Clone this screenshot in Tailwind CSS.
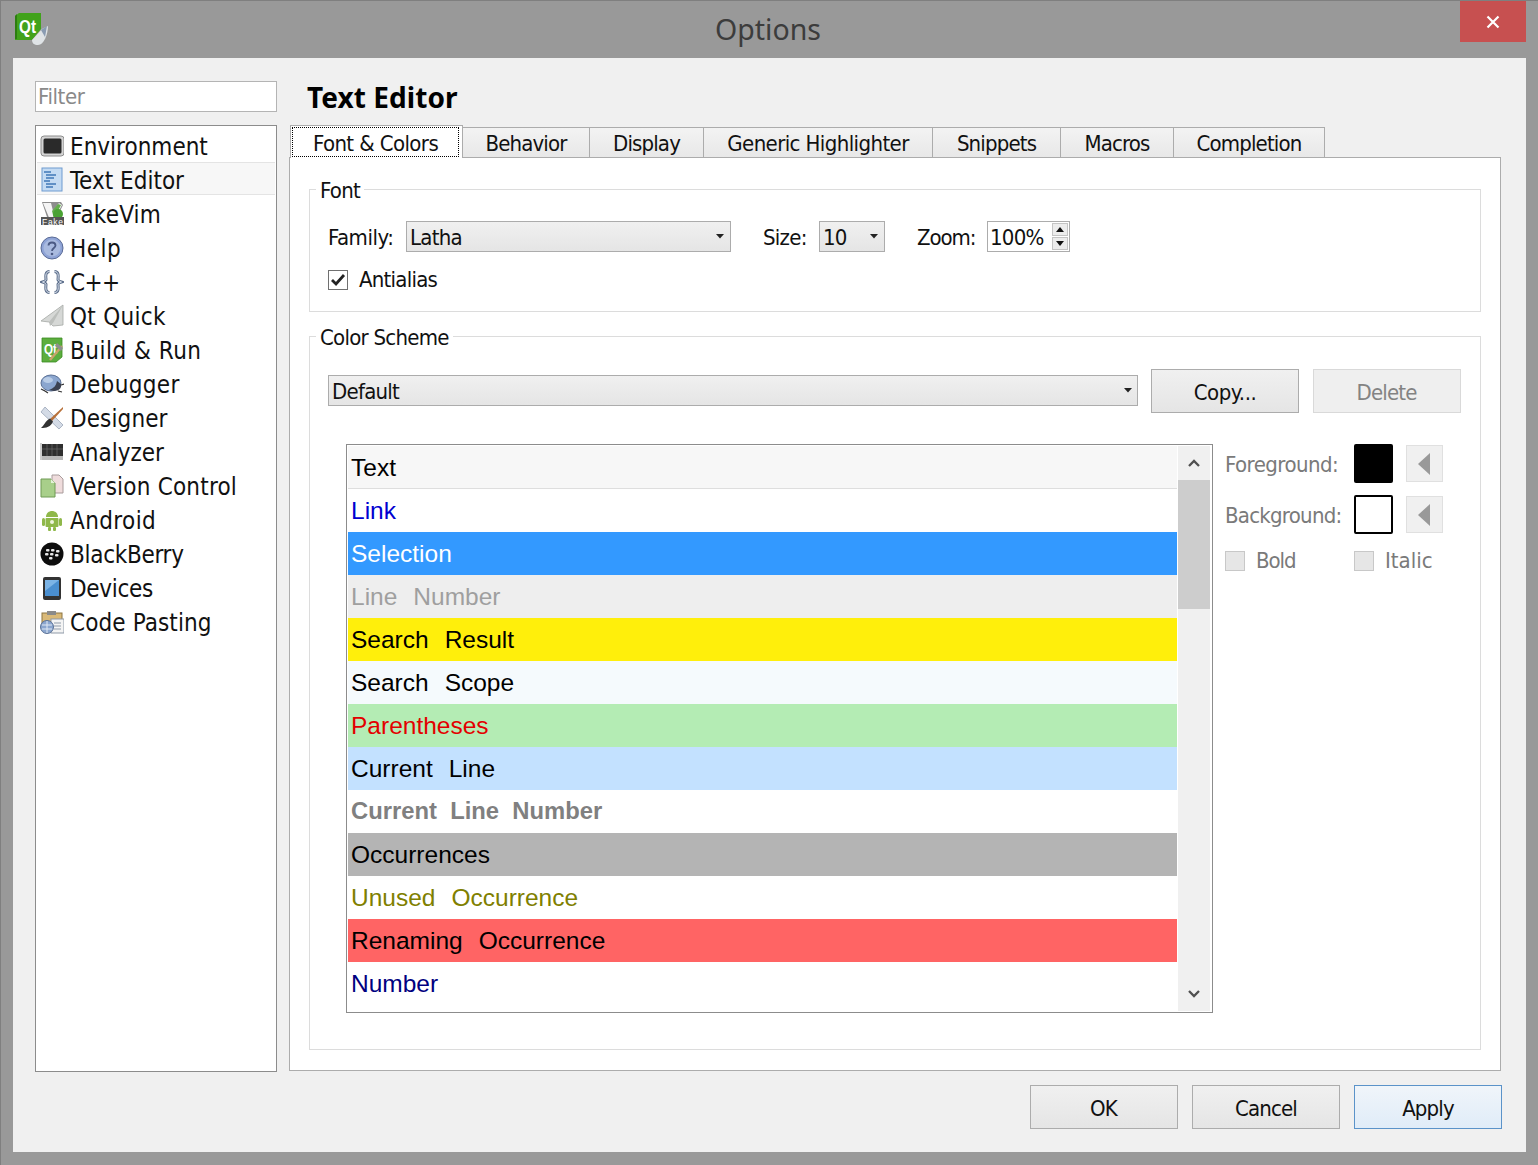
<!DOCTYPE html>
<html><head><meta charset="utf-8"><title>Options</title>
<script src="https://cdn.jsdelivr.net/npm/@tailwindcss/browser@4"></script></head>
<body class="m-0 w-[1538px] h-[1165px] overflow-hidden bg-[#999999] font-['DejaVu_Sans_Condensed','Noto_Sans',sans-serif] text-[#111111]">
<div class="w-[1538px] h-[1165px] flex flex-col border-t border-l border-[#7f7f7f]">
  <!-- title bar -->
  <div class="relative h-[57px] shrink-0 flex justify-center items-center">
    <svg class="absolute left-[13px] top-[11px]" width="36" height="36" viewBox="0 0 36 36">
      <path d="M5 1H27V17L18 28H1V4Z" fill="#41a21b"/><path d="M1 4L3 2V27H1Z" fill="#2c7d10"/>
      <path d="M18 28L28 17L34 14C34 22 30 33 24 33C20 33 18 31 18 28Z" fill="#dfe3e6"/><path d="M27 18L33 14L31 25Z" fill="#8a9bb2"/>
      <text x="5" y="21" font-family="Liberation Sans" font-weight="700" font-size="19" fill="#fff" textLength="17" lengthAdjust="spacingAndGlyphs">Qt</text>
    </svg>
    <span class="font-['Noto_Sans'] text-[28.5px] leading-none text-[#3c3c3c] mr-[3px]">Options</span>
    <div class="absolute right-[12px] top-[0px] w-[66px] h-[41px] bg-[#c75050] flex items-center justify-center">
      <svg width="14" height="14" viewBox="0 0 14 14"><path d="M1.5 1.5L12.5 12.5M12.5 1.5L1.5 12.5" stroke="#fff" stroke-width="2.2"/></svg>
    </div>
  </div>
  <!-- client -->
  <div class="ml-[12px] w-[1513px] h-[1094px] bg-[#f0f0f0] pt-[23px] pl-[22px] flex flex-col">
    <div class="flex items-start h-[990px]">
      <!-- left -->
      <div class="w-[242px] shrink-0 flex flex-col">
        <div class="h-[31px] border border-[#b4b4b4] bg-white flex items-center pl-[2px] text-[22px] text-[#8a8a8a] tracking-[-0.4px]">Filter</div>
        <div class="mt-[13px] h-[947px] border border-[#8c8c8c] bg-white pt-[2px] pl-[1px] pr-[1px] flex flex-col text-[24px]">
          <div class="h-[34px] flex items-center gap-[6px] pl-[3px] pt-[2px]">
            <svg class="shrink-0" width="24" height="24" viewBox="0 0 24 24"><rect x="1" y="2" width="23" height="20" rx="3" fill="#d4d4d4" stroke="#8d8d8d"/><rect x="3.5" y="4.5" width="18" height="15" rx="1.5" fill="#2a2a2a"/></svg>
            <span class="pt-[2px]">Environment</span></div>
          <div class="h-[33px] mb-[1px] flex items-center gap-[6px] pl-[3px] pt-[2px] bg-[#f7f7f7] border-y border-[#e4e4e4]">
            <svg class="shrink-0 -mt-[2px]" width="24" height="26" viewBox="0 0 24 26"><rect x="2" y="2" width="20" height="23" fill="#c4dbf3" stroke="#6f9bd0"/><path d="M4 6h7M6 9h10M6 12h8M4 15h6M6 18h10M6 21h7" stroke="#3f78b8" stroke-width="1.3"/></svg>
            <span class="pt-[2px]">Text Editor</span></div>
          <div class="h-[34px] flex items-center gap-[6px] pl-[3px] pt-[2px]">
            <svg class="shrink-0" width="24" height="26" viewBox="0 0 24 26"><path d="M2 1H21L23 4L17 16H7Z" fill="#8d8d8d"/><path d="M3 2H11L13 10L19 2L22 4L14 19H10Z" fill="#f4f4f4"/><path d="M12 10L18 3L21 4L14 18Z" fill="#63ad4d"/><circle cx="18" cy="13" r="5" fill="#4aa234"/><rect x="1" y="16" width="23" height="8" fill="#555"/><text x="2" y="23.500" font-family="Liberation Sans" font-size="8.500" fill="#fff" textLength="21">Fake</text></svg>
            <span class="pt-[2px] tracking-[0.2px]">FakeVim</span></div>
          <div class="h-[34px] flex items-center gap-[6px] pl-[3px] pt-[2px]">
            <svg class="shrink-0" width="24" height="24" viewBox="0 0 24 24"><circle cx="12" cy="12" r="11" fill="#8ea3d6" stroke="#5a6b96"/><circle cx="12" cy="12" r="8.500" fill="#a9badf"/><path d="M8.500 9.500C8.500 5.500 15.500 5.500 15.500 9.500C15.500 12 12 12 12 15" fill="none" stroke="#4b5a84" stroke-width="1.800"/><circle cx="12" cy="18" r="1.300" fill="#4b5a84"/></svg>
            <span class="pt-[2px] tracking-[0.5px]">Help</span></div>
          <div class="h-[34px] flex items-center gap-[6px] pl-[3px] pt-[2px]">
            <svg class="shrink-0" width="24" height="24" viewBox="0 0 24 24"><path d="M9.500 1.500C4.500 1.500 6 8 6 9.500C6 11 2.500 12 2.500 12C2.500 12 6 13 6 14.500C6 16 4.500 22.500 9.500 22.500M14.500 1.500C19.500 1.500 18 8 18 9.500C18 11 21.500 12 21.500 12C21.500 12 18 13 18 14.500C18 16 19.500 22.500 14.500 22.500" fill="none" stroke="#5d6f8c" stroke-width="3"/><path d="M9.500 1.500C4.500 1.500 6 8 6 9.500C6 11 2.500 12 2.500 12C2.500 12 6 13 6 14.500C6 16 4.500 22.500 9.500 22.500M14.500 1.500C19.500 1.500 18 8 18 9.500C18 11 21.500 12 21.500 12C21.500 12 18 13 18 14.500C18 16 19.500 22.500 14.500 22.500" fill="none" stroke="#dfe6f0" stroke-width="1"/></svg>
            <span class="pt-[2px] tracking-[-0.6px]">C++</span></div>
          <div class="h-[34px] flex items-center gap-[6px] pl-[3px] pt-[2px]">
            <svg class="shrink-0" width="24" height="24" viewBox="0 0 24 24"><path d="M23 1L1 17L9 18L13 22L23 21Z" fill="#d6d8d6" stroke="#a5a8a5" stroke-width=".8"/><path d="M23 1L9 18L10 22L13 19Z" fill="#bcbfbc"/></svg>
            <span class="pt-[2px] tracking-[0.3px]">Qt Quick</span></div>
          <div class="h-[34px] flex items-center gap-[6px] pl-[3px] pt-[2px]">
            <svg class="shrink-0" width="24" height="26" viewBox="0 0 24 26"><path d="M2 1H22V20L16 25H2Z" fill="#5cae3e" stroke="#3b8a22" stroke-width=".8"/><text x="4" y="17" font-family="Liberation Sans" font-weight="700" font-size="15" fill="#fff" textLength="13" lengthAdjust="spacingAndGlyphs">Qt</text><path d="M10 23L22 9" stroke="#c9a36a" stroke-width="2.400"/><path d="M17 6L23 11L21 14L15 9Z" fill="#8e8f8e"/></svg>
            <span class="pt-[2px] tracking-[0.5px]">Build &amp; Run</span></div>
          <div class="h-[34px] flex items-center gap-[6px] pl-[3px] pt-[2px]">
            <svg class="shrink-0" width="24" height="24" viewBox="0 0 24 24"><path d="M1 17L5 19L8 21M21 13L24 12M18 19L22 20" stroke="#333" stroke-width="1.200"/><ellipse cx="11" cy="11" rx="10" ry="8" fill="#8ba6cf" stroke="#5b7196"/><path d="M14 19C19 19 22 16 21 12L17 9C16 14 14 16 9 18Z" fill="#3b4150"/><ellipse cx="8" cy="8" rx="5" ry="3" fill="#b9cce6"/></svg>
            <span class="pt-[2px] tracking-[0.35px]">Debugger</span></div>
          <div class="h-[34px] flex items-center gap-[6px] pl-[3px] pt-[2px]">
            <svg class="shrink-0" width="24" height="24" viewBox="0 0 24 24"><path d="M1 6L5 1L23 19L19 23Z" fill="#d4dbe6" stroke="#9aa6b8" stroke-width=".8"/><path d="M23 1L10 13L12 15L23 3Z" fill="#b8713a"/><path d="M10 12.500L13 15.500C11 21 6 22 1 22C4 20 5 15 10 12.500Z" fill="#333"/></svg>
            <span class="pt-[2px] tracking-[0.1px]">Designer</span></div>
          <div class="h-[34px] flex items-center gap-[6px] pl-[3px] pt-[2px]">
            <svg class="shrink-0" width="24" height="24" viewBox="0 0 24 24"><rect x="2" y="4" width="21" height="16" fill="#2f2f2f"/><rect x="2" y="16" width="21" height="4" fill="#b8b8b8"/><path d="M7 4V16M12 4V16M17 4V16M2 9H23" stroke="#6a6a6a" stroke-width=".7"/><path d="M1 3V20" stroke="#9a9a9a"/></svg>
            <span class="pt-[2px]">Analyzer</span></div>
          <div class="h-[34px] flex items-center gap-[6px] pl-[3px] pt-[2px]">
            <svg class="shrink-0" width="24" height="24" viewBox="0 0 24 24"><path d="M12 1H19L23 5V19H12Z" fill="#efdcdc" stroke="#a89b9b"/><path d="M1 5H11L15 9V23H1Z" fill="#a8cf8a" stroke="#6f9a55"/><path d="M11 5V9H15Z" fill="#e4f2d8"/></svg>
            <span class="pt-[2px] tracking-[0.2px]">Version Control</span></div>
          <div class="h-[34px] flex items-center gap-[6px] pl-[3px] pt-[2px]">
            <svg class="shrink-0" width="24" height="24" viewBox="0 0 24 24"><path d="M6 9C6 1 18 1 18 9Z" fill="#8fb84a"/><rect x="5.500" y="10" width="13" height="9" rx="1" fill="#8fb84a"/><rect x="2" y="10" width="3" height="8" rx="1.500" fill="#8fb84a"/><rect x="19" y="10" width="3" height="8" rx="1.500" fill="#8fb84a"/><rect x="8" y="19" width="3" height="4" rx="1" fill="#8fb84a"/><rect x="13" y="19" width="3" height="4" rx="1" fill="#8fb84a"/><circle cx="12" cy="14" r="2" fill="#eef5dd"/></svg>
            <span class="pt-[2px] tracking-[0.4px]">Android</span></div>
          <div class="h-[34px] flex items-center gap-[6px] pl-[3px] pt-[2px]">
            <svg class="shrink-0" width="24" height="24" viewBox="0 0 24 24"><circle cx="12" cy="12" r="11.500" fill="#0d0d0d"/><g fill="#e8e8e8"><rect x="6" y="7" width="3.500" height="2.500" rx="1"/><rect x="11" y="7" width="3.500" height="2.500" rx="1"/><rect x="16" y="8" width="3.500" height="2.500" rx="1"/><rect x="5" y="11" width="3.500" height="2.500" rx="1"/><rect x="10" y="11" width="3.500" height="2.500" rx="1"/><rect x="15" y="12" width="3.500" height="2.500" rx="1"/><rect x="9" y="15" width="3.500" height="2.500" rx="1"/></g></svg>
            <span class="pt-[2px] tracking-[-0.3px]">BlackBerry</span></div>
          <div class="h-[34px] flex items-center gap-[6px] pl-[3px] pt-[2px]">
            <svg class="shrink-0" width="24" height="24" viewBox="0 0 24 24"><rect x="3" y="1" width="18" height="23" rx="2" fill="#333"/><rect x="5" y="4" width="14" height="16" fill="#4a8fd0"/><path d="M5 4H19L5 15Z" fill="#7cb4e6"/></svg>
            <span class="pt-[2px] tracking-[-0.3px]">Devices</span></div>
          <div class="h-[34px] flex items-center gap-[6px] pl-[3px] pt-[2px]">
            <svg class="shrink-0" width="24" height="24" viewBox="0 0 24 24"><rect x="2" y="3" width="20" height="12" fill="#d9b978" stroke="#8c7440"/><rect x="7" y="1" width="9" height="4" fill="#8a8a8a"/><rect x="11" y="9" width="13" height="14" fill="#f4f4f4" stroke="#8f9aa8"/><path d="M14 13h7M14 16h7M14 19h7" stroke="#8f9aa8"/><circle cx="7" cy="17" r="6.500" fill="#8ba6cf" stroke="#5b7196"/><path d="M2 15h10M2 19h10M7 11v12" stroke="#dfe8f4"/></svg>
            <span class="pt-[2px] tracking-[0.1px]">Code Pasting</span></div>
        </div>
      </div>
      <!-- right -->
      <div class="ml-[12px] w-[1212px] shrink-0 flex flex-col">
        <div class="h-[46px] pl-[18px] flex items-start">
          <span class="font-['Noto_Sans'] font-bold text-[28px] leading-[32px] text-black tracking-[0.06px]">Text Editor</span>
        </div>
        <!-- tabs -->
        <div class="relative h-[30px] flex pl-[1px] text-[22px] tracking-[-0.85px]">
          <div class="relative z-10 -mt-[2px] w-[173px] h-[33px] bg-white border-t border-x border-[#acacac] pt-[1px] pl-[1px]">
            <div class="w-[167px] h-[30px] border border-dotted border-black flex items-center justify-center pt-[2px] tracking-[-0.6px]">Font &amp; Colors</div>
          </div>
          <div class="w-[127px] bg-gradient-to-b from-[#f3f3f3] to-[#e8e8e8] border-t border-r border-[#acacac] flex items-center justify-center pt-[2px]">Behavior</div>
          <div class="w-[114px] bg-gradient-to-b from-[#f3f3f3] to-[#e8e8e8] border-t border-r border-[#acacac] flex items-center justify-center pt-[2px]">Display</div>
          <div class="w-[229px] bg-gradient-to-b from-[#f3f3f3] to-[#e8e8e8] border-t border-r border-[#acacac] flex items-center justify-center pt-[2px] tracking-[-0.6px]">Generic Highlighter</div>
          <div class="w-[128px] bg-gradient-to-b from-[#f3f3f3] to-[#e8e8e8] border-t border-r border-[#acacac] flex items-center justify-center pt-[2px]">Snippets</div>
          <div class="w-[113px] bg-gradient-to-b from-[#f3f3f3] to-[#e8e8e8] border-t border-r border-[#acacac] flex items-center justify-center pt-[2px]">Macros</div>
          <div class="w-[151px] bg-gradient-to-b from-[#f3f3f3] to-[#e8e8e8] border-t border-r border-[#acacac] flex items-center justify-center pt-[2px]">Completion</div>
        </div>
        <!-- pane -->
        <div class="w-[1212px] h-[914px] bg-white border border-[#acacac] pt-[31px] pl-[19px] flex flex-col text-[22px] tracking-[-0.75px]">
          <!-- Font group -->
          <div class="relative w-[1172px] h-[123px] border border-[#dcdcdc] pt-[31px] pl-[18px]">
            <span class="absolute left-[6px] -top-[13px] bg-white px-[4px] leading-[28px]">Font</span>
            <div class="flex items-center h-[31px]">
              <span class="w-[78px] pt-[2px] tracking-[-0.45px]">Family:</span>
              <div class="relative w-[325px] h-[31px] border border-[#acacac] bg-gradient-to-b from-[#f0f0f0] to-[#e5e5e5] flex items-center pl-[3px] pt-[2px]">Latha
                <svg class="absolute right-[6px] top-[12px]" width="8" height="5" viewBox="0 0 8 5"><path d="M0 0H8L4 4.500Z" fill="#222"/></svg></div>
              <span class="ml-[32px] w-[56px] pt-[2px]">Size:</span>
              <div class="relative w-[66px] h-[31px] border border-[#acacac] bg-gradient-to-b from-[#f0f0f0] to-[#e5e5e5] flex items-center pl-[3px] pt-[2px]">10
                <svg class="absolute right-[6px] top-[12px]" width="8" height="5" viewBox="0 0 8 5"><path d="M0 0H8L4 4.500Z" fill="#222"/></svg></div>
              <span class="ml-[32px] w-[70px] pt-[2px] tracking-[-1.1px]">Zoom:</span>
              <div class="relative w-[83px] h-[31px] border border-[#acacac] bg-white flex items-center pl-[2px] pt-[2px]">100%
                <div class="absolute right-[1px] top-[1px] w-[16px] h-[27px] flex flex-col gap-[1px]">
                  <div class="h-[13px] bg-[#ececec] border border-[#c4c4c4] flex items-center justify-center"><svg width="8" height="5" viewBox="0 0 8 5"><path d="M0 5H8L4 0Z" fill="#111"/></svg></div>
                  <div class="h-[13px] bg-[#ececec] border border-[#c4c4c4] flex items-center justify-center"><svg width="8" height="5" viewBox="0 0 8 5"><path d="M0 0H8L4 5Z" fill="#111"/></svg></div>
                </div></div>
            </div>
            <div class="mt-[16px] flex items-center h-[23px]">
              <div class="w-[20px] h-[20px] border border-[#707070] bg-white flex items-center justify-center"><svg width="16" height="14" viewBox="0 0 16 14"><path d="M2 7L6 11L14 2" fill="none" stroke="#222" stroke-width="2.800"/></svg></div>
              <span class="ml-[11px]">Antialias</span>
            </div>
          </div>
          <!-- Color group -->
          <div class="relative mt-[24px] w-[1172px] h-[714px] border border-[#dcdcdc] pt-[32px] pl-[18px]">
            <span class="absolute left-[6px] -top-[13px] bg-white px-[4px] leading-[28px]">Color Scheme</span>
            <div class="flex items-center h-[44px]">
              <div class="relative mb-[1px] w-[810px] h-[31px] border border-[#acacac] bg-gradient-to-b from-[#f0f0f0] to-[#e5e5e5] flex items-center pl-[3px] pt-[2px]">Default
                <svg class="absolute right-[5px] top-[12px]" width="8" height="5" viewBox="0 0 8 5"><path d="M0 0H8L4 4.500Z" fill="#222"/></svg></div>
              <div class="ml-[13px] w-[148px] h-[44px] border border-[#acacac] bg-gradient-to-b from-[#f0f0f0] to-[#e5e5e5] flex items-center justify-center pt-[2px] tracking-[-0.5px]">Copy...</div>
              <div class="ml-[14px] w-[148px] h-[44px] border border-[#d9d9d9] bg-[#efefef] flex items-center justify-center text-[#838383] pt-[2px] pr-[1px] tracking-[-0.85px]">Delete</div>
            </div>
            <div class="mt-[31px] ml-[18px] flex items-start">
              <!-- list -->
              <div class="w-[867px] h-[569px] border border-[#8c8c8c] bg-white p-[1px] flex font-['Liberation_Sans'] text-[24.5px] tracking-normal [word-spacing:1.2px] whitespace-pre">
                <div class="w-[829px] flex flex-col">
                  <div class="h-[43px] bg-[#f7f7f7] border-b border-[#dedede] text-black flex items-center pl-[3px] pt-[2px]">Text</div>
                  <div class="h-[43px] text-[#0000d0] flex items-center pl-[3px] pt-[2px]">Link</div>
                  <div class="h-[43px] bg-[#3399ff] text-white flex items-center pl-[3px] pt-[2px]">Selection</div>
                  <div class="h-[43px] bg-[#eeeeee] text-[#9f9f9f] flex items-center pl-[3px] pt-[2px]">Line  Number</div>
                  <div class="h-[43px] bg-[#ffef0b] text-black flex items-center pl-[3px] pt-[2px]">Search  Result</div>
                  <div class="h-[43px] bg-[#f5fafd] text-black flex items-center pl-[3px] pt-[2px]">Search  Scope</div>
                  <div class="h-[43px] bg-[#b4ecb4] text-[#e30000] flex items-center pl-[3px] pt-[2px]">Parentheses</div>
                  <div class="h-[43px] bg-[#c3e1ff] text-black flex items-center pl-[3px] pt-[2px]">Current  Line</div>
                  <div class="h-[43px] text-[#808080] font-bold text-[23.8px] [word-spacing:0px] flex items-center pl-[3px] pb-[1px]">Current  Line  Number</div>
                  <div class="h-[43px] bg-[#b4b4b4] text-black flex items-center pl-[3px] pt-[2px]">Occurrences</div>
                  <div class="h-[43px] text-[#808000] flex items-center pl-[3px] pt-[2px]">Unused  Occurrence</div>
                  <div class="h-[43px] bg-[#ff6464] text-black flex items-center pl-[3px] pt-[2px]">Renaming  Occurrence</div>
                  <div class="h-[43px] text-[#000080] flex items-center pl-[3px] pt-[2px]">Number</div>
                </div>
                <div class="ml-[1px] w-[32px] bg-[#f0f0f0] flex flex-col">
                  <div class="h-[34px] flex items-center justify-center"><svg width="12" height="8" viewBox="0 0 12 8"><path d="M1 7L6 2L11 7" fill="none" stroke="#505050" stroke-width="2.300"/></svg></div>
                  <div class="h-[129px] bg-[#cdcdcd]"></div>
                  <div class="mt-auto h-[34px] flex items-center justify-center"><svg width="12" height="8" viewBox="0 0 12 8"><path d="M1 1L6 6L11 1" fill="none" stroke="#505050" stroke-width="2.300"/></svg></div>
                </div>
              </div>
              <!-- side -->
              <div class="ml-[12px] flex flex-col text-[#7a7a7a]">
                <div class="flex items-center h-[39px]">
                  <span class="w-[129px] pt-[2px] tracking-[-0.55px]">Foreground:</span>
                  <div class="w-[39px] h-[39px] bg-black rounded-[2px]"></div>
                  <div class="ml-[13px] w-[37px] h-[37px] border border-[#e0e0e0] bg-[#f0f0f0] flex items-center justify-center pr-[2px]"><svg width="12" height="22" viewBox="0 0 12 22"><path d="M12 0V22L0 11Z" fill="#999"/></svg></div>
                </div>
                <div class="mt-[12px] flex items-center h-[39px]">
                  <span class="w-[129px] pt-[2px]">Background:</span>
                  <div class="w-[39px] h-[39px] bg-white border-2 border-black rounded-[2px]"></div>
                  <div class="ml-[13px] w-[37px] h-[37px] border border-[#e0e0e0] bg-[#f0f0f0] flex items-center justify-center pr-[2px]"><svg width="12" height="22" viewBox="0 0 12 22"><path d="M12 0V22L0 11Z" fill="#999"/></svg></div>
                </div>
                <div class="mt-[15px] flex items-center h-[23px]">
                  <div class="w-[20px] h-[20px] border border-[#c8c8c8] bg-[#e6e6e6]"></div>
                  <span class="ml-[11px] w-[98px] tracking-[-1.1px]">Bold</span>
                  <div class="w-[20px] h-[20px] border border-[#c8c8c8] bg-[#e6e6e6]"></div>
                  <span class="ml-[11px] tracking-normal">Italic</span>
                </div>
              </div>
            </div>
          </div>
        </div>
      </div>
    </div>
    <!-- buttons -->
    <div class="mt-[14px] ml-[995px] flex gap-[14px] text-[22px] tracking-[-0.85px]">
      <div class="w-[148px] h-[44px] border border-[#acacac] bg-gradient-to-b from-[#f0f0f0] to-[#e5e5e5] flex items-center justify-center pt-[2px] pr-[1px]">OK</div>
      <div class="w-[148px] h-[44px] border border-[#acacac] bg-gradient-to-b from-[#f0f0f0] to-[#e5e5e5] flex items-center justify-center pt-[2px]">Cancel</div>
      <div class="w-[148px] h-[44px] border border-[#5b93c9] bg-gradient-to-b from-[#f0f5fa] to-[#e0ecf8] flex items-center justify-center pt-[2px]">Apply</div>
    </div>
  </div>
</div>
</body></html>
